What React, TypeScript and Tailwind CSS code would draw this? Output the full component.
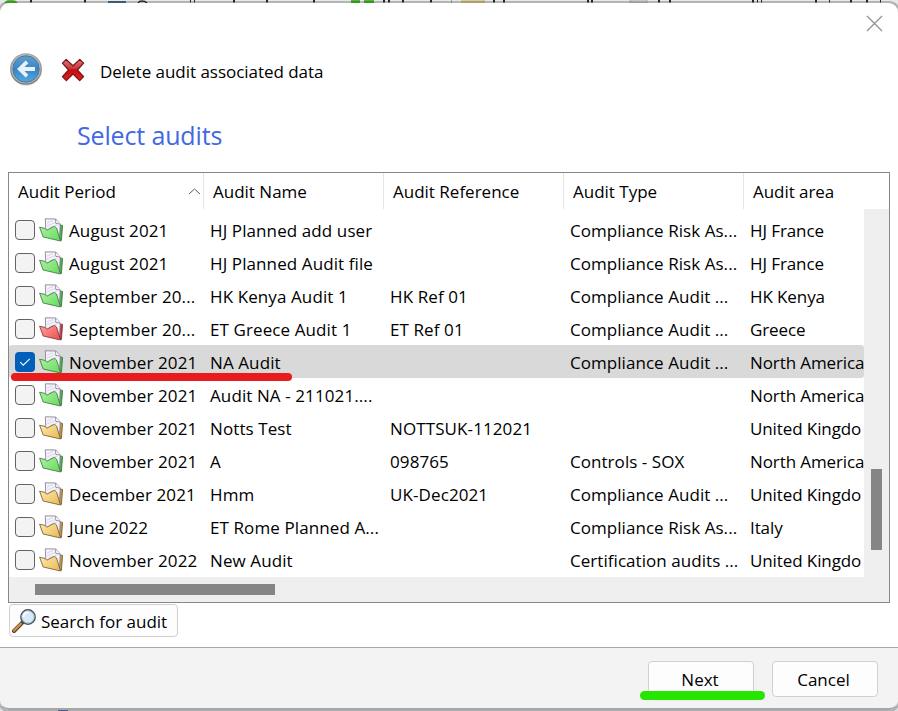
import React from "react";

type FolderColor = "green" | "red" | "yellow";

interface AuditRow {
  period: string;
  name: string;
  reference?: string;
  type?: string;
  area: string;
  folder: FolderColor;
  checked?: boolean;
}

const rows: AuditRow[] = [
  { period: "August 2021", name: "HJ Planned add user", type: "Compliance Risk As...", area: "HJ France", folder: "green" },
  { period: "August 2021", name: "HJ Planned Audit file", type: "Compliance Risk As...", area: "HJ France", folder: "green" },
  { period: "September 20...", name: "HK Kenya Audit 1", reference: "HK Ref 01", type: "Compliance Audit ...", area: "HK Kenya", folder: "green" },
  { period: "September 20...", name: "ET Greece Audit 1", reference: "ET Ref 01", type: "Compliance Audit ...", area: "Greece", folder: "red" },
  { period: "November 2021", name: "NA Audit", type: "Compliance Audit ...", area: "North America", folder: "green", checked: true },
  { period: "November 2021", name: "Audit NA - 211021....", area: "North America", folder: "green" },
  { period: "November 2021", name: "Notts Test", reference: "NOTTSUK-112021", area: "United Kingdo", folder: "yellow" },
  { period: "November 2021", name: "A", reference: "098765", type: "Controls - SOX", area: "North America", folder: "green" },
  { period: "December 2021", name: "Hmm", reference: "UK-Dec2021", type: "Compliance Audit ...", area: "United Kingdo", folder: "yellow" },
  { period: "June 2022", name: "ET Rome Planned A...", type: "Compliance Risk As...", area: "Italy", folder: "yellow" },
  { period: "November 2022", name: "New Audit", type: "Certification audits ...", area: "United Kingdo", folder: "yellow" },
];

const folderColors: Record<FolderColor, { light: string; mid: string; dark: string; edge: string }> = {
  green: { light: "#a5f29a", mid: "#72dc68", dark: "#4fb54c", edge: "#34703a" },
  red: { light: "#ff9b94", mid: "#ed5a5b", dark: "#c93c42", edge: "#7c282c" },
  yellow: { light: "#ffe7a5", mid: "#e8bf61", dark: "#c59a45", edge: "#705222" },
};

const FolderIcon = ({ color }: { color: FolderColor }) => {
  const c = folderColors[color];
  return (
    <svg className="h-6 w-6 shrink-0" viewBox="0 0 24 24" fill="none">
      <defs>
        <linearGradient id={`folder-${color}`} x1="3" y1="9" x2="16" y2="23" gradientUnits="userSpaceOnUse">
          <stop stopColor={c.light} />
          <stop offset="1" stopColor={c.mid} />
        </linearGradient>
      </defs>
      <path d="M20.5 6.8 23.6 7.4 22.4 22.6 20 21Z" fill={c.dark} stroke={c.edge} strokeWidth=".8" />
      <path d="M6.3.8 16.8 1l4.4 5-.6 14L7 17Z" fill="#f5f3fa" stroke="#81738f" strokeWidth=".8" />
      <path d="m8 5 6-2.4M8 8l8-3.4M10 10l8-3" stroke="#dcd7e6" strokeWidth="1" />
      <path d="m16.6 1.2.2 4.2 4.2.6" fill="#fff" stroke="#81738f" strokeWidth=".8" />
      <path
        d="M.6 9.2 6 10.4l1.8 1.8 6.4-3.4c1.8-.5 3 .3 3.7 2.2l3.6 12L4.2 19Z"
        fill={`url(#folder-${color})`}
        stroke={c.edge}
        strokeWidth=".8"
        strokeLinejoin="round"
      />
    </svg>
  );
};

const BackIcon = () => (
  <svg className="h-[34px] w-[34px]" viewBox="0 0 34 34" fill="none">
    <defs>
      <linearGradient id="back-ring" x2="0" y2="1">
        <stop stopColor="#a8acae" />
        <stop offset="1" stopColor="#77797b" />
      </linearGradient>
      <linearGradient id="back-fill" x2="0" y2="1">
        <stop stopColor="#61a0cf" />
        <stop offset=".5" stopColor="#3684c6" />
        <stop offset="1" stopColor="#54a8e3" />
      </linearGradient>
    </defs>
    <circle cx="17" cy="17.6" r="16.2" fill="#000" opacity=".15" />
    <circle cx="17" cy="17" r="15.8" fill="url(#back-ring)" />
    <circle cx="17" cy="17" r="14.6" fill="#b4b7b8" />
    <circle cx="17" cy="17" r="13.2" fill="url(#back-fill)" stroke="#4b7898" />
    <path d="m18 9.8-7.3 7.2 7.3 7.2M11 17h15" stroke="#e8f1f8" strokeWidth="3.8" />
  </svg>
);

const DeleteIcon = () => (
  <svg className="h-6 w-6" viewBox="0 0 24 24">
    <defs>
      <linearGradient id="delete-fill" x2="0" y2="1">
        <stop stopColor="#db7677" />
        <stop offset=".42" stopColor="#c93a3c" />
        <stop offset=".5" stopColor="#c80d0f" />
        <stop offset="1" stopColor="#dc2222" />
      </linearGradient>
    </defs>
    <path
      d="m5.2 1.4 6.8 6.4 6.8-6.4 3.8 3.8-6.2 6.8 6.2 6.6-3.9 4-6.7-6.5-6.7 6.5-3.9-4L7.6 12 1.4 5.2Z"
      fill="url(#delete-fill)"
      stroke="#761417"
      strokeWidth="1.2"
      strokeLinejoin="round"
    />
  </svg>
);

const SearchIcon = () => (
  <svg className="h-6 w-6 shrink-0" viewBox="0 0 24 24" fill="none">
    <path d="m2 22 9.3-9.3" stroke="#5c3c1b" strokeWidth="4" strokeLinecap="round" />
    <path d="m2 21.6 7-7" stroke="#c7924c" strokeWidth="2.2" strokeLinecap="round" />
    <path d="m9.5 14.2 2-2" stroke="#454b50" strokeWidth="2.5" />
    <circle cx="16" cy="8" r="7.2" fill="#d5eafa" stroke="#48535a" strokeWidth="1.4" />
    <circle cx="16" cy="8" r="6" stroke="#a7bac5" strokeWidth=".8" />
    <path d="M11.5 8c0-3 2-4.7 4.7-4.7" stroke="#f5fbff" strokeWidth="2" />
  </svg>
);

const Checkbox = ({ checked }: { checked?: boolean }) =>
  checked ? (
    <span className="flex h-5 w-5 shrink-0 items-center justify-center rounded-[4px] bg-[#005fb8]">
      <svg className="h-3 w-3" viewBox="0 0 12 12" fill="none">
        <path d="m1.2 6.2 3 3 6.6-6.4" stroke="#fff" strokeWidth="1.1" />
      </svg>
    </span>
  ) : (
    <span className="h-5 w-5 shrink-0 rounded-[4px] border border-[#636363] bg-[#f3f3f3]" />
  );

// Sliver of the main window's toolbar above the dialog
const toolbarMarks = [
  [30, 2], [84, 2], [190, 1], [194, 1], [233, 2], [266, 2], [313, 2],
  [383, 2], [388, 2], [402, 2], [430, 2], [493, 2], [503, 2], [587, 2], [591, 2],
  [658, 2], [669, 2], [752, 2], [757, 1], [761, 1], [815, 2], [829, 1], [850, 2], [866, 2], [880, 1],
];

const ToolbarSliver = () => (
  <svg className="h-[3px] w-full" viewBox="0 0 898 3">
    <rect width="898" height="3" fill="#e7e9e9" />
    <path d="M4 3q2-3 4-3h5q3 0 5 3Z" fill="#56c033" />
    <rect x="108" y="1" width="18" height="2" fill="#4a7791" />
    <path d="M138 3q1-2 4-2t5 2" fill="none" stroke="#29292c" strokeWidth="1.3" />
    <rect x="351" width="9" height="3" fill="#50b934" />
    <rect x="364" width="10" height="3" fill="#50b934" />
    <rect x="451" width="1" height="3" fill="#a8a8a8" />
    <rect x="461" width="24" height="3" fill="#dccb94" />
    <rect x="630" width="17" height="3" fill="#dadada" stroke="#999" strokeWidth=".6" />
    {toolbarMarks.map(([x, width]) => (
      <rect key={x} x={x} width={width} height="2.4" fill="#29292c" />
    ))}
  </svg>
);

const columns = ["Audit Name", "Audit Reference", "Audit Type"];

const App: React.FC = () => (
  <div className="relative flex h-[711px] w-[898px] flex-col overflow-hidden bg-[#dedfe0] font-['Open_Sans','Noto_Sans',sans-serif] text-[17px] leading-6 text-black">
    <ToolbarSliver />

    <div className="flex h-[707px] shrink-0 flex-col rounded-[9px] bg-white shadow-[0_0_0_2px_rgba(0,0,0,0.22)]">
      {/* Title bar */}
      <header className="flex h-[97px] items-start justify-between">
        <div className="flex items-center pt-[49px] pl-[9px]">
          <button aria-label="Back">
            <BackIcon />
          </button>
          <span className="ml-[18px] pt-px">
            <DeleteIcon />
          </span>
          <span className="ml-[15px] pt-[6px] tracking-[-0.03px]">Delete audit associated data</span>
        </div>
        <button className="mt-3 mr-[15px]" aria-label="Close">
          <svg className="h-[17px] w-[17px]" viewBox="0 0 17 17">
            <path d="m1 1 15 15M16 1 1 16" stroke="#929292" strokeWidth="1.3" />
          </svg>
        </button>
      </header>

      <h1 className="ml-[77px] h-[72px] pt-[19px] text-[25px] leading-8 tracking-[-0.15px] text-[#4169e1]">Select audits</h1>

      {/* Audit list */}
      <section className="ml-2 h-[431px] w-[882px] border border-[#828790]">
        <div className="flex h-9">
          <div className="flex w-[195px] items-center justify-between border-r border-[#e5e5e5] pr-[2px] pl-[9px]">
            <span className="pt-[2px]">Audit Period</span>
            <svg className="h-[7px] w-[13px]" viewBox="0 0 13 7" fill="none">
              <path d="m1 6 5.5-5L12 6" stroke="#5c5c5c" />
            </svg>
          </div>
          {columns.map((title) => (
            <div key={title} className="flex w-[180px] items-center border-r border-[#e5e5e5] pt-[2px] pl-[9px]">
              {title}
            </div>
          ))}
          <div className="flex items-center pt-[2px] pl-[9px] tracking-[-0.05px]">Audit area</div>
        </div>

        <div className="flex h-[368px]">
          <div className="w-[855px] overflow-hidden pt-1">
            {rows.map((row, i) => (
              <div
                key={i}
                className={`flex h-[33px] items-center rounded-[3px] whitespace-nowrap ${row.checked ? "bg-[#d9d9d9]" : ""}`}
              >
                <div className="flex w-[201px] shrink-0 items-center pl-[6px]">
                  <Checkbox checked={row.checked} />
                  <span className="ml-1">
                    <FolderIcon color={row.folder} />
                  </span>
                  <span className="ml-[6px] pt-[2px] tracking-[0.1px]">{row.period}</span>
                </div>
                <div className="w-[180px] shrink-0 pt-[2px] tracking-[0.1px]">{row.name}</div>
                <div className="w-[180px] shrink-0 pt-[2px] tracking-[0.1px]">{row.reference}</div>
                <div className="w-[180px] shrink-0 pt-[2px] tracking-[0.05px]">{row.type}</div>
                <div className="w-[114px] shrink-0 pt-[2px] tracking-[-0.1px]">{row.area}</div>
              </div>
            ))}
          </div>
          <div className="w-[25px] bg-[#efefef] pt-[260px] pl-[7px]">
            <div className="h-[81px] w-[11px] bg-[#858585]" />
          </div>
        </div>
        <div className="h-[25px] bg-[#efefef] pt-[7px] pl-[26px]">
          <div className="h-[11px] w-[240px] bg-[#858585]" />
        </div>
      </section>

      <div className="h-[44px] pt-px pl-[9px]">
        <button className="flex h-[33px] w-[169px] items-center gap-[5px] rounded-[4px] border border-[#d0d0d0] bg-[#fdfdfd] pl-[2px]">
          <SearchIcon />
          <span className="pt-[2px]">Search for audit</span>
        </button>
      </div>

      <footer className="flex h-[63px] justify-end gap-[18px] rounded-b-[9px] border-t border-b-2 border-t-[#aaa] border-b-[#a6a6a6] bg-[#f3f3f3] pt-[13px] pr-5">
        <button className="h-9 w-[106px] rounded-[4px] border border-[#d0d0d0] bg-[#fdfdfd] pt-[2px] pr-[2px]">Next</button>
        <button className="h-9 w-[106px] rounded-[4px] border border-[#d0d0d0] bg-[#fdfdfd] pt-[2px] pr-[3px]">Cancel</button>
      </footer>
    </div>

    <div className="h-px pl-[58px]">
      <div className="h-px w-[10px] bg-[#4a5b8c]" />
    </div>

    {/* Marker strokes over the dialog */}
    <div className="absolute top-[373px] left-[11px] h-2 w-[281px] rounded-full bg-[#e81c1c]" />
    <div className="absolute top-[691px] left-[640px] h-[9px] w-[125px] rounded-full bg-[#26e600]" />
  </div>
);

export default App;
